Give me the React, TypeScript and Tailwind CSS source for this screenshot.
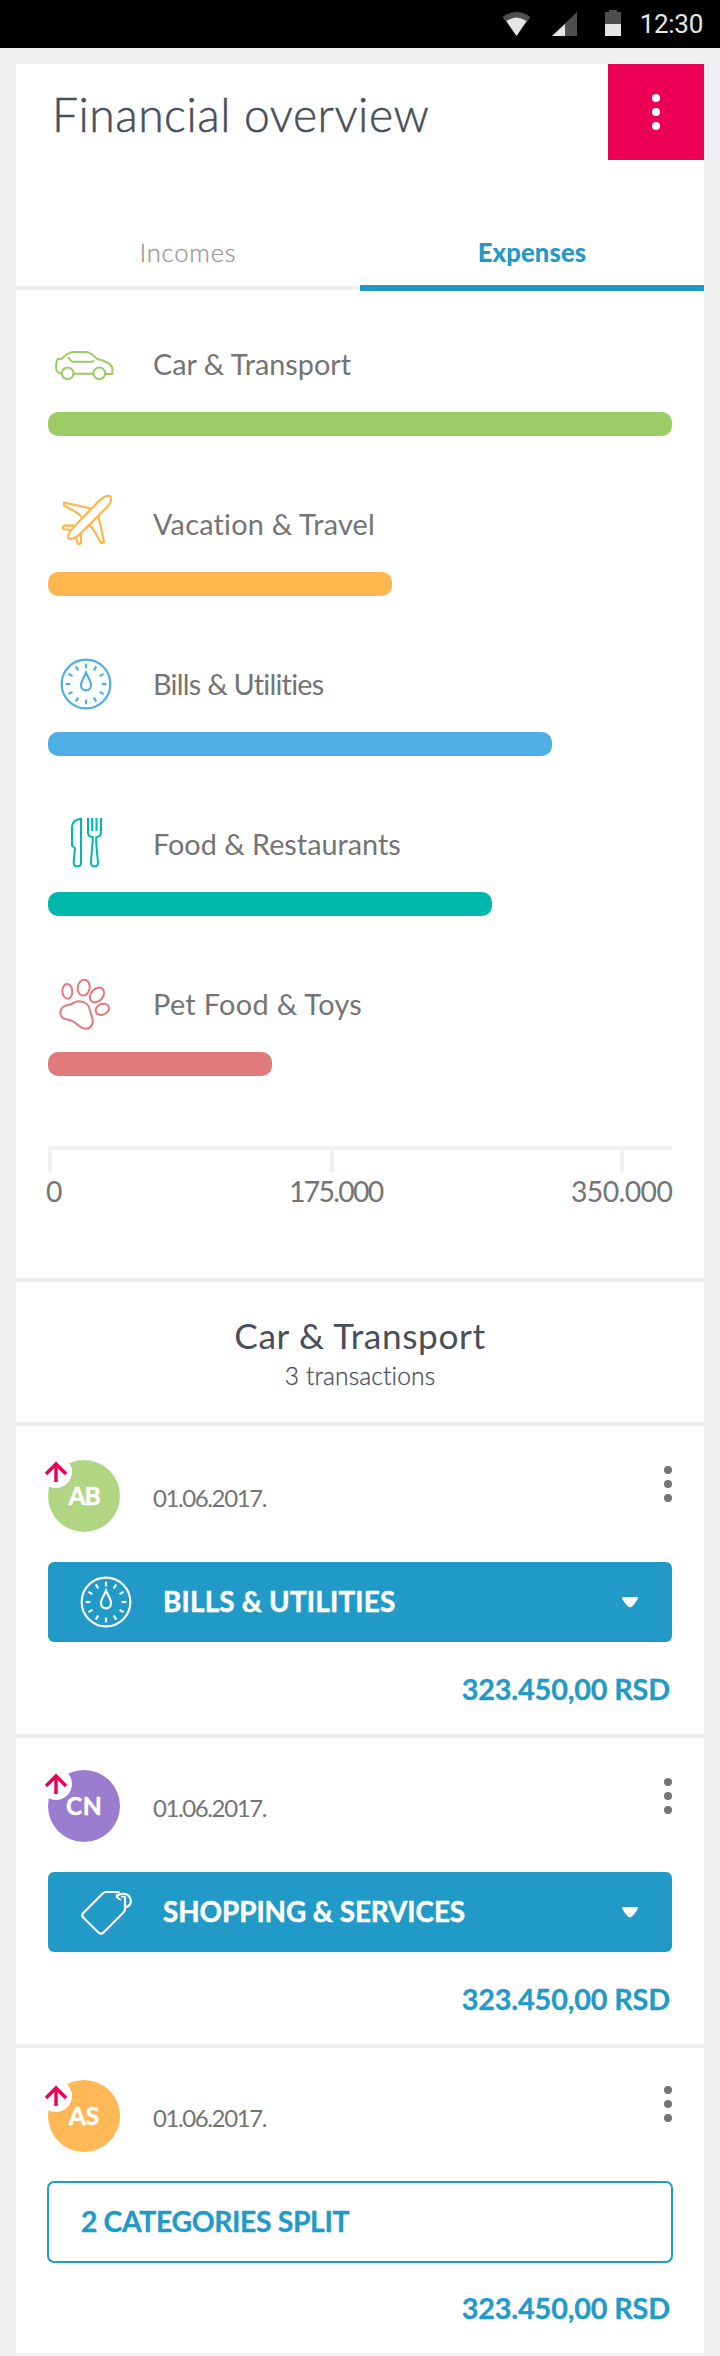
import type { ReactNode } from "react";

const ICON_BOX = "h-16 w-[72px] shrink-0";

function CarIcon() {
  return (
    <svg viewBox="144 36 216 192" className={ICON_BOX} fill="none" stroke="#9bcc66" strokeWidth="6">
      <circle cx="203" cy="160" r="17.5" />
      <circle cx="298" cy="160" r="17.5" />
      <path d="M185 161Q168 159 168 141Q168 125 173 117H184Q205 97 220 96H258Q272 97 292 117Q330 126 337 142V162H317M221 161H280" />
      <path d="M205 111Q212 124 219 125H275Q281 125 281 121" />
    </svg>
  );
}

function PlaneIcon() {
  return (
    <svg viewBox="144 516 216 192" className={ICON_BOX} fill="none" stroke="#feb64f" strokeWidth="6.5" strokeLinejoin="round">
      <path d="M205 655C202 641 211 631 222 620L293 547C308 531 323 525 331 529C336 536 332 550 322 560L238 644C227 654 214 659 205 655Z" />
      <path d="M275 566L192 548V557L228 576Q239 583 246 594" />
      <path d="M295 586L312 667L303 669L283 634Q277 620 265 614" />
      <path d="M212 630L189 627Q186 616 200 616L224 617" />
      <path d="M229 652L232 669L237 673L243 670Q244 655 242 640" />
    </svg>
  );
}

function MeterIcon({ color, shift = "" }: { color: string; shift?: string }) {
  return (
    <svg viewBox="144 36 216 192" className={`${ICON_BOX} ${shift}`} fill="none" stroke={color} strokeWidth="6.5">
      <circle cx="258" cy="132" r="73" />
      <path d="M258 98C263 111 273 123 273 136A15 15 0 0 1 243 136C243 123 253 111 258 98Z" />
      {[0, 30, 60, 90, 120, 150, 180, 210, 240, 270, 300, 330].map((angle) => (
        <path key={angle} d="M258 71V85" transform={`rotate(${angle} 258 132)`} />
      ))}
    </svg>
  );
}

function CutleryIcon() {
  return (
    <svg viewBox="144 516 216 192" className={ICON_BOX} fill="none" stroke="#00b9ae" strokeWidth="6">
      <path d="M243 536V668Q243 679 232 679Q221 679 221 668L225 624L216 617V563Q216 539 243 536Z" />
      <path d="M264 534V578Q264 590 278 591Q279 600 276 625L273 668Q273 679 284 679Q294 679 294 668L290 625Q288 600 289 591Q303 590 303 578V534" />
      <path d="M276.500 534V573M289.500 534V573" />
    </svg>
  );
}

function PawIcon() {
  return (
    <svg viewBox="144 66 216 192" className={ICON_BOX} fill="none" stroke="#e07a7a" strokeWidth="6">
      <ellipse cx="202" cy="124" rx="15" ry="22" transform="rotate(-4 202 124)" />
      <ellipse cx="251" cy="113" rx="18" ry="24" transform="rotate(10 251 113)" />
      <ellipse cx="291" cy="135" rx="18" ry="25" transform="rotate(42 291 135)" />
      <ellipse cx="307" cy="178" rx="21" ry="16" transform="rotate(-24 307 178)" />
      <path d="M236 154C255 154 268 165 270 182C274 200 280 205 278 218C275 235 262 238 250 235C235 230 225 213 208 210C190 208 180 200 181 187C182 172 195 165 208 164C220 162 225 154 236 154Z" />
    </svg>
  );
}

function TagIcon() {
  return (
    <svg viewBox="210 420 216 192" className={ICON_BOX} fill="none" stroke="#fff" strokeWidth="6.5">
      <path d="M359 458L354 456H319Q313 456 309 460L249 520Q244 526 249 532L296 578Q303 584 310 578L371 517Q375 512 375 506V472" />
      <path d="M350 472C356 459 381 456 390 473C397 488 389 500 375 502" />
      <path d="M350 461V472L363 480M363 470L377 470" strokeWidth="5" />
    </svg>
  );
}

const categories: { name: string; icon: ReactNode; bar: string; text: string }[] = [
  { name: "Car & Transport", icon: <CarIcon />, bar: "w-full bg-[#9bcc66]", text: "tracking-normal" },
  { name: "Vacation & Travel", icon: <PlaneIcon />, bar: "w-[344px] bg-[#feb64f]", text: "tracking-[0.23px]" },
  { name: "Bills & Utilities", icon: <MeterIcon color="#4dafe3" />, bar: "w-[504px] bg-[#4dafe3]", text: "tracking-[-0.75px]" },
  { name: "Food & Restaurants", icon: <CutleryIcon />, bar: "w-[444px] bg-[#00b9ae]", text: "tracking-normal" },
  { name: "Pet Food & Toys", icon: <PawIcon />, bar: "w-[224px] bg-[#e07a7a]", text: "tracking-[0.35px]" },
];

function StatusBar() {
  return (
    <div className="flex h-12 items-start justify-end bg-black pr-[17px]">
      <svg viewBox="0 0 120 48" className="h-12 w-[120px]">
        <path d="M1.500 17Q15 7 29.500 17L15.500 36Z" fill="#4f4f4f" />
        <path d="M5.500 21Q15.500 14 25.500 21L15.500 36Z" fill="#e6e6e6" />
        <path d="M76 12V36H51Z" fill="#4f4f4f" />
        <path d="M64 24V36H51Z" fill="#e6e6e6" />
        <path d="M104 12H108V10H116V12H120V24H104Z" fill="#4f4f4f" />
        <path d="M104 24H120V36H104Z" fill="#e6e6e6" />
      </svg>
      <span className="ml-[19px] pt-[2px] font-[Roboto,sans-serif] text-[26px] leading-[45px] tracking-[-0.3px] text-[#e6e6e6]">12:30</span>
    </div>
  );
}

function Dots({ color }: { color: string }) {
  return (
    <div className="flex flex-col gap-[6px]">
      <i className={`size-2 rounded-full ${color}`} />
      <i className={`size-2 rounded-full ${color}`} />
      <i className={`size-2 rounded-full ${color}`} />
    </div>
  );
}

function CategoryButton({ icon, label, tracking }: { icon: ReactNode; label: string; tracking: string }) {
  return (
    <button className="flex h-20 w-full items-center rounded-[6px] bg-[#219ac8] pr-[34px] pl-[22px] text-white">
      {icon}
      <span className={`flex-1 pl-[21px] text-left text-[27.8px] font-bold [-webkit-text-stroke:0.5px] ${tracking}`}>{label}</span>
      <svg viewBox="0 0 16 11" className="h-[11px] w-4" fill="#fff">
        <path d="M0 1Q0 0 1 0H15Q16 0 16 1Q15 4 10.500 9Q8 11.500 5.500 9Q1 4 0 1Z" />
      </svg>
    </button>
  );
}

interface TransactionProps {
  initials: string;
  avatar: string;
  badge: string;
  menu: string;
  children: ReactNode;
}

function Transaction({ initials, avatar, badge, menu, children }: TransactionProps) {
  return (
    <article className="border-b-4 border-[#f0f0f0] px-8 pt-8">
      <div className="flex h-[72px]">
        <div className={`relative flex size-[72px] items-center justify-center rounded-full text-[24.7px] font-bold text-white [-webkit-text-stroke:0.5px] ${avatar}`}>
          {initials}
          <svg viewBox="0 0 32 32" className={`absolute -left-2 size-8 ${badge}`}>
            <circle cx="16" cy="16" r="16" fill="#fff" />
            <path d="M16 26V8M6 18L16 8L26 18" fill="none" stroke="#eb0054" strokeWidth="3.400" />
          </svg>
        </div>
        <time className="flex-1 pt-[2px] pl-[33px] text-[24px] leading-[72px] tracking-[-1.4px] text-[#747474]">01.06.2017.</time>
        <div className={menu}>
          <Dots color="bg-[#747474]" />
        </div>
      </div>
      <div className="mt-[30px] h-20">{children}</div>
      <p className="h-[92px] pt-px pr-[2px] text-right text-[28.8px] leading-[92px] font-bold tracking-[-0.15px] text-[#219ac8] [-webkit-text-stroke:0.3px]">323.450,00 RSD</p>
    </article>
  );
}

export default function App() {
  return (
    <div className="h-[2356px] w-[720px] overflow-hidden bg-[#f0f0f0] font-[Lato,sans-serif]">
      <StatusBar />
      <main className="mx-4 mt-4 h-[2290px] overflow-hidden bg-white">
        <header className="flex h-24">
          <h1 className="flex-1 pt-[3px] pl-9 text-[46.3px] leading-[94px] font-light tracking-[0.5px] text-[#474e5c] [-webkit-text-stroke:0.5px]">Financial overview</h1>
          <button className="flex w-24 items-center justify-center bg-[#eb0054]">
            <Dots color="bg-white" />
          </button>
        </header>

        <nav className="mt-[60px] flex h-[71px] text-center text-[25.6px] leading-[34px]">
          <button className="h-[70px] flex-1 border-b-4 border-[#f0f0f0] pt-[15px] pb-[17px] font-light tracking-[0.8px] text-[#999] [-webkit-text-stroke:0.3px]">Incomes</button>
          <button className="h-[71px] flex-1 border-b-6 border-[#219ac8] pt-[15px] pb-4 font-black tracking-[0.15px] text-[#219ac8]">Expenses</button>
        </nav>

        <section className="h-[991px] border-b-4 border-[#f0f0f0] px-8 pt-[41px] text-[28.8px] text-[#747474]">
          <div className="flex flex-col gap-14">
            {categories.map((c) => (
              <div key={c.name}>
                <div className="flex h-16 items-center">
                  {c.icon}
                  <span className={`ml-[33px] pt-[2px] ${c.text}`}>{c.name}</span>
                </div>
                <div className={`mt-4 h-6 rounded-[10px] ${c.bar}`} />
              </div>
            ))}
          </div>
          <div className="mt-[70px] flex h-[26px] border-t-4 border-[#f0f0f0]">
            <i className="w-1 bg-[#f0f0f0]" />
            <i className="ml-[278px] w-1 bg-[#f0f0f0]" />
            <i className="ml-[286px] w-1 bg-[#f0f0f0]" />
          </div>
          <div className="-mx-[2px] flex text-[28.4px] leading-[39px]">
            <span className="w-[243px]">0</span>
            <span className="w-[282px] tracking-[-1.7px]">175.000</span>
            <span className="tracking-[-0.6px]">350.000</span>
          </div>
        </section>

        <section className="h-36 border-b-4 border-[#f0f0f0] pt-[33px] text-center leading-10 text-[#474e5c]">
          <h2 className="text-[35.2px] tracking-[0.62px]">Car &amp; Transport</h2>
          <p className="pt-px text-[24.6px] font-light tracking-[0.13px] [-webkit-text-stroke:0.3px]">3 transactions</p>
        </section>

        <section className="pt-[2px]">
          <Transaction initials="AB" avatar="bg-[#b0d683] tracking-[-1.2px]" badge="-top-1" menu="pt-[6px]">
            <CategoryButton icon={<MeterIcon color="#fff" shift="-ml-[2px] mr-[2px]" />} label="BILLS & UTILITIES" tracking="tracking-[0.22px]" />
          </Transaction>
          <Transaction initials="CN" avatar="bg-[#9b7dd0] tracking-[0.4px]" badge="-top-[2px]" menu="pt-2">
            <CategoryButton icon={<TagIcon />} label="SHOPPING & SERVICES" tracking="tracking-[-0.03px]" />
          </Transaction>
          <Transaction initials="AS" avatar="bg-[#feb856]" badge="top-0" menu="pt-[6px]">
            <button className="-m-px flex h-[82px] w-[626px] items-center rounded-[7px] border-2 border-[#219ac8] pb-px pl-8 text-[28.4px] font-bold tracking-[-0.39px] text-[#219ac8] [-webkit-text-stroke:0.3px]">
              2 CATEGORIES SPLIT
            </button>
          </Transaction>
        </section>
      </main>
    </div>
  );
}
